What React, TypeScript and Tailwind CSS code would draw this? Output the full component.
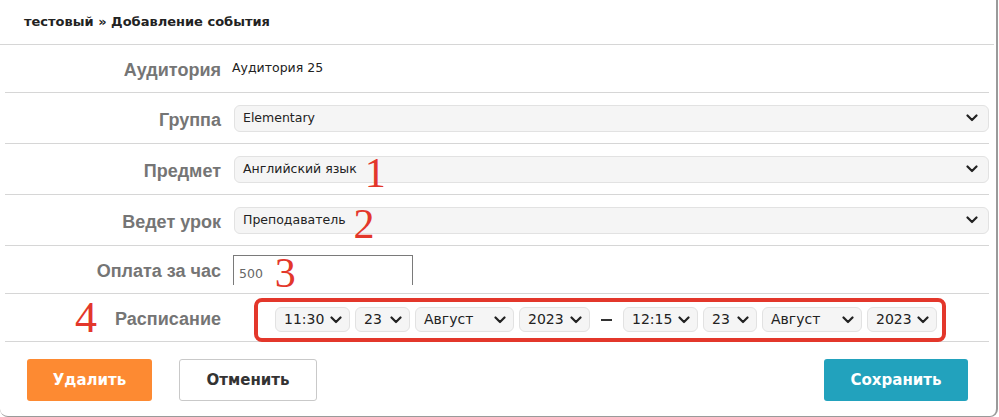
import React from "react";

const labelFont = { fontFamily: '"Liberation Sans", Arial, sans-serif' };
const valueFont = { fontFamily: '"DejaVu Sans", Verdana, sans-serif' };
const markFont = { fontFamily: '"Liberation Serif", "Times New Roman", serif' };

function Chevron() {
  return (
    <svg width="12" height="8" viewBox="0 0 12 8" className="shrink-0">
      <path d="M1.5 1.5 L6 6 L10.5 1.5" fill="none" stroke="#222" strokeWidth="2.2" strokeLinecap="round" strokeLinejoin="round" />
    </svg>
  );
}

function Mark({ n, className = "" }: { n: string; className?: string }) {
  return (
    <span style={markFont} className={"leading-none text-[#e3372b] " + className}>
      {n}
    </span>
  );
}

interface RowProps {
  label: string;
  h: string;
  children: React.ReactNode;
  extra?: React.ReactNode;
  top?: boolean;
}

function Row({ label, h, children, extra, top }: RowProps) {
  return (
    <div className={"ml-[5px] mr-[7px] flex items-center border-b border-[#d6d6d6] " + h}>
      <div className="w-[216px] flex items-center justify-end shrink-0">
        {extra}
        <span style={labelFont} className="text-[18px] font-bold text-[#757575] pt-1">
          {label}
        </span>
      </div>
      <div className={"flex-1 pl-[13px] flex " + (top ? "self-stretch items-start" : "items-center")}>{children}</div>
    </div>
  );
}

function Select({ value, mark }: { value: string; mark?: string }) {
  return (
    <div className="h-[27px] flex-1 flex items-center justify-between rounded-md border border-[#e2e2e2] bg-[#f5f5f5] pl-2 pr-[10px]">
      <div className="flex items-center">
        <span style={valueFont} className="text-[12.5px] text-[#222]">{value}</span>
        {mark && <Mark n={mark} className="ml-2 mt-2 text-[42px]" />}
      </div>
      <Chevron />
    </div>
  );
}

function Small({ value, w }: { value: string; w: string }) {
  return (
    <div className={"h-[25px] flex items-center justify-between rounded-md border border-[#e2e2e2] bg-[#f5f5f5] pl-2 pr-[7px] " + w}>
      <span style={valueFont} className="text-[14px] text-[#222]">{value}</span>
      <Chevron />
    </div>
  );
}

export default function App() {
  return (
    <div className="w-[999px] h-[417px] bg-white">
      <div className="w-[998px] h-[417px] border-r-2 border-b border-[#9a9a9a] rounded-bl-lg rounded-br-lg">
        <div className="h-[45px] mr-[2px] border-b border-[#d6d6d6] flex items-center pl-6">
          <span style={valueFont} className="text-[13px] font-bold text-[#222]">
            тестовый » Добавление события
          </span>
        </div>

        <Row label="Аудитория" h="h-[48px]">
          <span style={valueFont} className="text-[12.5px] text-[#222] -ml-[2px]">Аудитория 25</span>
        </Row>
        <Row label="Группа" h="h-[51px]">
          <Select value="Elementary" />
        </Row>
        <Row label="Предмет" h="h-[51px]">
          <Select value="Английский язык" mark="1" />
        </Row>
        <Row label="Ведет урок" h="h-[51px]">
          <Select value="Преподаватель" mark="2" />
        </Row>
        <Row label="Оплата за час" h="h-[48px]" top>
          <div className="w-[180px] h-[30px] mt-[9px] -ml-[1px] border-l border-r border-t border-[#7a7a7a] flex items-center pl-[5px]">
            <span style={valueFont} className="text-[12.5px] text-[#666] mt-2">500</span>
            <Mark n="3" className="ml-3 mt-1 text-[42px]" />
          </div>
        </Row>
        <Row label="Расписание" h="h-[48px]" extra={<Mark n="4" className="mr-[18px] text-[44px]" />}>
          <div className="ml-[20px] mt-[4px] w-[692px] h-[44px] rounded-lg border-4 border-[#e3372b] flex items-center gap-[5px] pl-[17px]">
            <Small value="11:30" w="w-[75px]" />
            <Small value="23" w="w-[55px]" />
            <Small value="Август" w="w-[99px]" />
            <Small value="2023" w="w-[71px]" />
            <div className="mx-[6px] w-[11px] h-[2px] bg-[#333]" />
            <Small value="12:15" w="w-[75px]" />
            <Small value="23" w="w-[54px]" />
            <Small value="Август" w="w-[100px]" />
            <Small value="2023" w="w-[70px]" />
          </div>
        </Row>

        <div className="flex items-center pt-[17px] pl-[27px] pr-[28px]">
          <button style={valueFont} className="w-[125px] h-[42px] rounded-[3px] bg-[#fd8a32] text-white text-[15px] font-bold">
            Удалить
          </button>
          <button style={valueFont} className="ml-[27px] w-[138px] h-[42px] rounded-[3px] border border-[#c9c9c9] bg-white text-[#333] text-[15px] font-bold">
            Отменить
          </button>
          <div className="flex-1" />
          <button style={valueFont} className="w-[144px] h-[42px] rounded-[3px] bg-[#22a2bd] text-white text-[15px] font-bold">
            Сохранить
          </button>
        </div>
      </div>
    </div>
  );
}
